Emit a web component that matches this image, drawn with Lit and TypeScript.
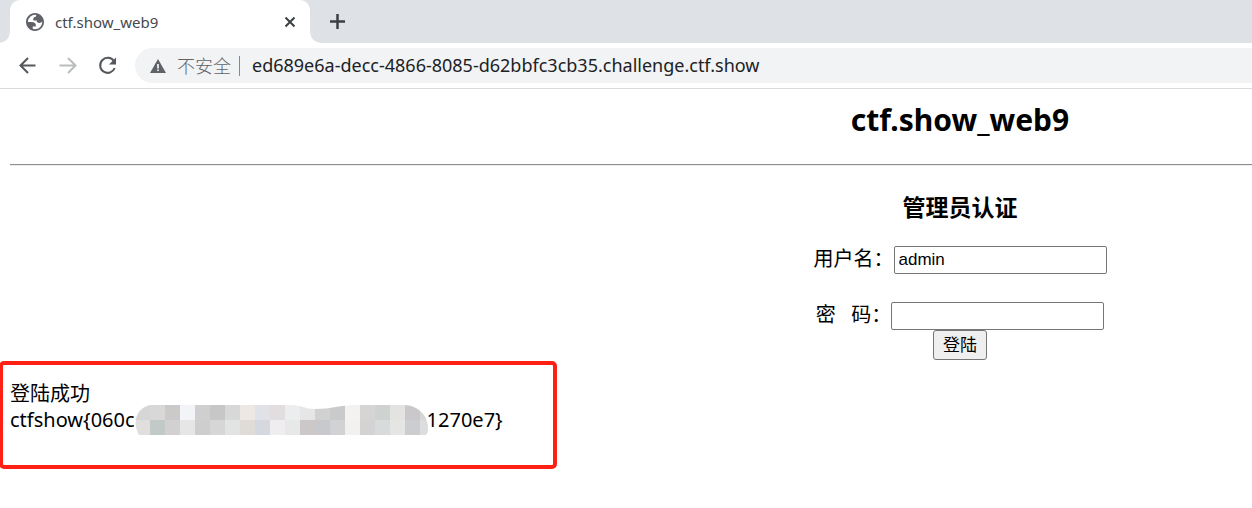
import { LitElement, html, css, svg } from "lit";
import { customElement, state } from "lit/decorators.js";

const MOSAIC_TOP = ["#d6d6d6", "#d8d8d8", "#cccac9", "#f2f4f7", "#cfcfcf", "#c7c7c8", "#d8d8d8", "#ede8e4", "#e0e2e8", "#e2dedf", "#ebedee", "#e5e6e5", "#d1d1d2", "#c9cacc", "#f4f2f0", "#d5d5d5", "#ced2d1", "#e3e3e1", "#cac8ca", "#d5d7d6"];
const MOSAIC_BOTTOM = ["#e0dfde", "#c3c8c9", "#d2d0d1", "#e6e6e6", "#cecece", "#d6d6d6", "#e1e4e3", "#dfdbd7", "#d5d8de", "#efedf0", "#e7e8e8", "#ccc8c8", "#c8c9cc", "#d2d2d4", "#f2f1f0", "#d3d3d3", "#d7dbdc", "#e5e5e3", "#cccdd0", "#dcdedd"];

@customElement("app-root")
export class AppRoot extends LitElement {
  @state() private user = "admin";

  static styles = css`
    :host {
      display: block;
      min-height: 100vh;
      overflow: hidden;
      background: #fff;
      color: #000;
      font-family: "Noto Sans", "Noto Sans CJK SC", sans-serif;
    }
    * { box-sizing: border-box; }
    svg { display: block; flex: none; }
    button { font: inherit; }
    .icon {
      border: 0;
      padding: 0;
      background: none;
      display: flex;
      flex: none;
      color: #54585c;
    }
    .icon:disabled { color: #babcbe; }
    .tabs {
      display: flex;
      height: 43px;
      background: #dee1e6;
      padding-left: 10px;
    }
    .tab {
      position: relative;
      display: flex;
      align-items: center;
      width: 300px;
      padding: 0 12px 0 16px;
      background: #fff;
      border-radius: 10px 10px 0 0;
      color: #45494d;
      font-size: 15px;
    }
    .tab::before, .tab::after {
      content: "";
      position: absolute;
      bottom: 0;
      width: 10px;
      height: 10px;
    }
    .tab::before {
      right: 100%;
      background: radial-gradient(circle at 0 0, #dee1e6 9px, #fff 10px);
    }
    .tab::after {
      left: 100%;
      background: radial-gradient(circle at 100% 0, #dee1e6 9px, #fff 10px);
    }
    .name { flex: 1; margin-left: 11px; }
    .add { align-self: center; margin-left: 19px; color: #3c4043; }
    .close { color: #3c4043; }
    .bar {
      display: flex;
      align-items: center;
      height: 46px;
      padding-left: 15px;
      border-bottom: 1px solid #dadbdd;
      gap: 16px;
    }
    .address {
      display: flex;
      align-items: center;
      flex: 1;
      height: 35px;
      padding-left: 15px;
      border-radius: 18px 0 0 18px;
      background: #f1f3f4;
      font-size: 18px;
      line-height: 24px;
    }
    .warn { color: #5f6368; margin-left: 11px; white-space: nowrap; font-weight: 300; }
    .rule { width: 1px; height: 20px; margin: 0 12px 0 8px; background: #85898d; }
    .url {
      flex: 1;
      min-width: 0;
      height: 24px;
      border: 0;
      padding: 0 0 2px;
      background: none;
      outline: 0;
      color: #202124;
      font: inherit;
    }
    .page { padding-left: 10px; font-size: 20px; line-height: 26px; }
    .centre { width: 584px; margin-left: auto; text-align: center; }
    h2 { margin: 0; padding: 10px 0 23px; font-size: 30px; line-height: 42px; }
    hr { margin: 0; border: 0; border-top: 1px solid #8f8f8f; border-bottom: 1px solid #ececec; }
    h3 { margin: 0; padding: 26px 0 24px; font-size: 23px; line-height: 30px; }
    .row { display: flex; justify-content: center; height: 28px; }
    .row + .row { margin-top: 28px; }
    .row label { white-space: pre; }
    .field {
      width: 213px;
      height: 28px;
      border: 1px solid #767676;
      border-radius: 2px;
      padding: 0 4px;
      font: 17px "Liberation Sans", sans-serif;
      outline: 0;
      background: #fff;
    }
    .send {
      display: block;
      margin: 0 auto;
      width: 54px;
      height: 30px;
      padding: 0;
      border: 1px solid #767676;
      border-radius: 3px;
      background: #efefef;
      font-size: 17px;
      line-height: 26px;
      color: #000;
    }
    .result {
      width: 558px;
      height: 108px;
      margin: 1px 0 0 -11px;
      padding: 16px 7px;
      border: 4px solid #ff2015;
      border-radius: 5px;
    }
    .flag { display: flex; align-items: flex-start; height: 26px; }
    .mosaic { margin: -2px -1px 0 0; }
  `;

  private globe() {
    return svg`<svg width="18" height="18" viewBox="2 2 20 20" aria-hidden="true">
      <path fill="#5f6368" fill-rule="evenodd" d="M12 2C6.480 2 2 6.480 2 12s4.480 10 10 10 10-4.480 10-10S17.520 2 12 2zM4 12h4.400c3.407.022 4.922 1.730 4.543 5.127H9.488v2.470a8.004 8.004 0 0 0 10.498-8.083C19.327 12.504 18.332 13 17 13c-2.137 0-3.206-.916-3.206-2.750h-3.748c-.274-2.728.683-4.092 2.870-4.092 0-.975.327-1.597.811-1.970A8.004 8.004 0 0 0 4 12z"/>
    </svg>`;
  }

  private mosaic() {
    const row = (colors: string[], y: number) =>
      colors.map((c, i) => svg`<rect x=${i * 15} y=${y} width="15" height="15" fill=${c}/>`);
    return svg`<svg class="mosaic" width="293" height="30" viewBox="0 0 293 30" role="img" aria-label="***" shape-rendering="crispEdges">
      <clipPath id="blot"><path d="M15 0H156C167 0 169 4 180 4C197 4 205 0 220 0H269C283 0 293 11 293 22C293 26 293 28 291 30H4C-2 20-1 4 15 0Z"/></clipPath>
      <g clip-path="url(#blot)">${row(MOSAIC_TOP, 0)}${row(MOSAIC_BOTTOM, 15)}</g>
    </svg>`;
  }

  render() {
    return html`
      <header>
        <div class="tabs">
          <div class="tab">
            ${this.globe()}
            <span class="name">ctf.show_web9</span>
            <button class="icon close" aria-label="close"><svg width="16" height="16" viewBox="0 0 16 16"><path d="M3.500 3.500l9 9M12.500 3.500l-9 9" stroke="currentColor" stroke-width="2"/></svg></button>
          </div>
          <button class="icon add" aria-label="new tab"><svg width="16" height="16" viewBox="0 0 16 16"><path d="M8.500 0v15M1 7.500h15" stroke="currentColor" stroke-width="2.500"/></svg></button>
        </div>
        <nav class="bar">
          <button class="icon" aria-label="back"><svg width="24" height="24" viewBox="0 0 24 24"><path d="M20.500 11.500H6M13 4L5.500 11.500l7.500 7.500" fill="none" stroke="currentColor" stroke-width="2"/></svg></button>
          <button class="icon" disabled aria-label="forward"><svg width="24" height="24" viewBox="0 0 24 24"><path d="M4.500 11.500H20M13 4l7.500 7.500-7.500 7.500" fill="none" stroke="currentColor" stroke-width="2"/></svg></button>
          <button class="icon" aria-label="reload"><svg width="24" height="24" viewBox="0 0 24 24"><path d="M18.800 7A7.500 7.500 0 1 0 19.700 14" fill="none" stroke="currentColor" stroke-width="2"/><path d="M21 3.500v7h-7z" fill="currentColor"/></svg></button>
          <div class="address">
            <svg width="16" height="16" viewBox="0 0 16 16" aria-hidden="true"><path d="M8 1l8 14H0z" fill="#5f6368"/><path d="M7.200 6h1.600v4.500H7.200zM7.200 11.500h1.600v1.600H7.200z" fill="#fff"/></svg>
            <span class="warn">不安全</span><span class="rule"></span>
            <input class="url" aria-label="URL" .value=${"ed689e6a-decc-4866-8085-d62bbfc3cb35.challenge.ctf.show"}>
          </div>
        </nav>
      </header>
      <main class="page">
        <h2 class="centre">ctf.show_web9</h2>
        <hr>
        <form class="centre" @submit=${(e: Event) => e.preventDefault()}>
          <h3>管理员认证</h3>
          <div class="row"><label for="u">用户名：</label><input class="field" id="u" .value=${this.user}></div>
          <div class="row"><label for="p">密${"\u00a0\u00a0\u00a0"}码：</label><input class="field" id="p" type="password"></div>
          <button class="send">登陆</button>
        </form>
        <section class="result">
          <div>登陆成功</div>
          <div class="flag"><span>ctfshow{060c</span>${this.mosaic()}<span>1270e7}</span></div>
        </section>
      </main>
    `;
  }
}
